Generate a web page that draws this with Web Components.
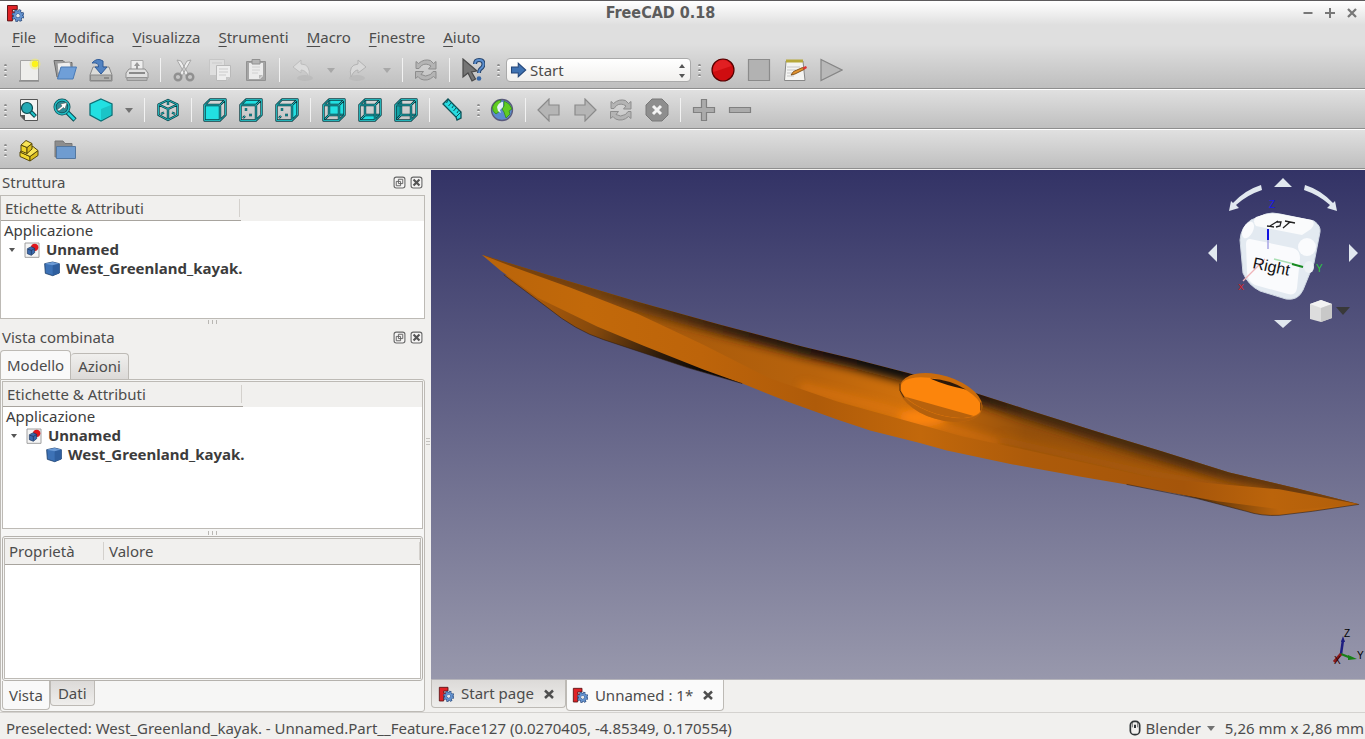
<!DOCTYPE html>
<html lang="it">
<head>
<meta charset="utf-8">
<title>FreeCAD 0.18</title>
<style>
html, body { margin: 0; height: 100%; }
body { font: 15px/19px "Noto Sans", "Open Sans", sans-serif; color: #4c4c4c; background: #f1f0ee; overflow: hidden; }
</style>
</head>
<body>
<cad-window></cad-window>
<script>
const wires = d => `<path d="${d}" fill="none" stroke="#0a3f45" stroke-width="2.400" stroke-linejoin="round"/><path d="${d}" fill="none" stroke="#25bfc4" stroke-width=".900" stroke-linejoin="round"/>`;
const faces = {
  front: 'M1.500 7H17V22.500H1.500Z', rear: 'M7 1.500H22.500V17H7Z',
  top: 'M1.500 7L7 1.500H22.500L17 7Z', bottom: 'M1.500 22.500L7 17H22.500L17 22.500Z',
  left: 'M1.500 7L7 1.500V17L1.500 22.500Z', right: 'M17 7L22.500 1.500V17L17 22.500Z'
};
const box = face => {
  const fill = `<path d="${faces[face]}" fill="${face === 'left' ? '#14a3a6' : '#22e0e2'}"/>`;
  const inner = {
    front: '', top: wires('M7 10V13M4 20L6 18M10 17H13'), right: wires('M7 10V13M4 20L6 18M10 17H13'),
    rear: wires('M7 2V17H22M7 17L2 22'), bottom: wires('M7 2V17H22M7 17L2 22'), left: wires('M7 2V17H22M7 17L2 22')
  }[face];
  return fill + inner + wires('M1.500 7H17V22.500H1.500ZM1.500 7L7 1.500H22.500L17 7M22.500 1.500V17L17 22.500');
};
const fclogo = `<path d="M2 2H15V7.500H8.500V10.500H12.500V15.500H8.500V22.500H2Z" fill="#e02226" stroke="#5c1416" stroke-width="1.300"/>
<circle cx="16" cy="15.500" r="6.600" fill="none" stroke="#28487a" stroke-width="3.600" stroke-dasharray="3.100 2.080"/><circle cx="16" cy="15.500" r="4.400" fill="none" stroke="#28487a" stroke-width="4.600"/><circle cx="16" cy="15.500" r="6.200" fill="none" stroke="#6593cf" stroke-width="2.600" stroke-dasharray="2 2.870" stroke-dashoffset="-.500"/><circle cx="16" cy="15.500" r="4.300" fill="none" stroke="#6593cf" stroke-width="2.800"/><circle cx="16" cy="15.500" r="2.200" fill="#e9e9e9"/>`;
const cycle = `<g fill="#b4b4b4" stroke="#8d8d8d" stroke-width="1"><path d="M2 10.500V3.500L4.500 5.500Q10 .5 16.500 2.500L19.500 5.500L22 3.500V11H14.500L17 8Q12 4.500 7.500 7.500L5 10.500Z"/><path d="M22 13.500V20.500L19.500 18.500Q13.500 24 6.500 21L4 18.500L1.500 20.500V13.500H9.500L7 16.500Q11.500 19.500 16.500 16.500L19 13.500Z"/></g>`;
const back = `<path d="M1 12L12 1V7H22V17H12V23Z" fill="#b5b5b5" stroke="#8a8a8a" stroke-width="1.200"/>`;
const ICONS = {
  logo: fclogo,
  new: `<path d="M3.500 2.500H21.500V22.500H3.500Z" fill="#eeeeec" stroke="#a5a5a5"/><path d="M2 23H22" stroke="#777" /><circle cx="18" cy="6" r="5.500" fill="#f5ef5a" opacity=".5"/><circle cx="18" cy="6" r="3.200" fill="#fcf31a"/>`,
  open: `<path d="M1 2.500H10L12 4.500H19V19H4Z" fill="#9b9b9b" stroke="#6b6b6b"/><path d="M4 5L17 4L19 15H5Z" fill="#eee" stroke="#999"/><path d="M8 9H23.500L20 21H4.500Z" fill="#6f9fd8" stroke="#4a7ab5"/>`,
  save: `<path d="M4 9H20L23 17V23H1V17Z" fill="#dcdcda" stroke="#888"/><path d="M1.500 17H22.500V22.500H1.500Z" fill="#b0b0ae" stroke="#888"/><path d="M15 20H20" stroke="#666"/><path d="M3 5Q8-1 14 3V9H18L12 16L6 9H9.500Q10 4 3 5Z" fill="#5283c2" stroke="#2f5b98"/>`,
  print: `<path d="M6 2.500H18V13H6Z" fill="#eee" stroke="#aaa"/><path d="M12 4L15 8H13V11H11V8H9Z" fill="#999"/><path d="M4 11H20L23 15V20H1V15Z" fill="#e0e0e0" stroke="#8f8f8f"/><path d="M4 15H20" stroke="#8a8a8a" stroke-width="2"/><path d="M2 19.500H22V22.500H2Z" fill="#b5b5b5" stroke="#949494"/>`,
  cut: `<path d="M5 2L9 3L17 17L14 18ZM19 2L15 3L7 17L10 18Z" fill="#eee" stroke="#a8a8a8"/><circle cx="6" cy="19" r="3.300" fill="none" stroke="#909090" stroke-width="2.400"/><circle cx="18" cy="19" r="3.300" fill="none" stroke="#909090" stroke-width="2.400"/>`,
  copy: `<path d="M1.500 1.500H16.500V17.500H1.500Z" fill="#dedede" stroke="#c6c6c6"/><path d="M8.500 7.500H22.500V19L19 22.500H8.500Z" fill="#ededed" stroke="#b9b9b9"/><path d="M11 11H20M11 14H20M11 17H18M4 5H14" stroke="#cbcbcb"/><path d="M18 23V19H22Z" fill="#c6c6c6"/>`,
  paste: `<path d="M2.500 3.500H21.500V22.500H2.500Z" fill="#a5a5a5" stroke="#929292"/><path d="M5 5H19V18L16 21H5Z" fill="#ebebeb"/><path d="M8 1.500H16V6H8Z" fill="#b5b5b5" stroke="#909090"/><path d="M8 9H16M8 12H16M8 15H14" stroke="#d0d0d0"/><path d="M15 21V17H19Z" fill="#bbb"/>`,
  undo: `<ellipse cx="14" cy="20" rx="8" ry="3" fill="#b8b8b8" opacity=".7"/><path d="M2 9L10 2V6Q20 6 18 19Q15 12 10 12V15Z" fill="#dcdcdc" stroke="#bdbdbd"/>`,
  redo: `<ellipse cx="10" cy="20" rx="8" ry="3" fill="#b8b8b8" opacity=".7"/><path d="M19 9L11 2V6Q1 7 4 19Q7 12 11 12V15Z" fill="#d8d8d8" stroke="#b2b2b2"/>`,
  cycle,
  help: `<path d="M2 1V19L7 15L11 23L14.500 21L10.500 14L16 13Z" fill="#757575" stroke="#4a4a4a" stroke-width="1.200"/><path d="M14 6Q14 2 18 2Q22.500 2 22.500 6Q22.500 9 19.500 11Q18 12 18 15" fill="none" stroke="#27466f" stroke-width="4"/><path d="M14 6Q14 2 18 2Q22.500 2 22.500 6Q22.500 9 19.500 11Q18 12 18 15" fill="none" stroke="#5c8fcf" stroke-width="1.800"/><circle cx="18" cy="20.500" r="2.300" fill="#3867a5"/>`,
  go: `<path d="M2 8H11V3L21 12L11 21V16H2Z" fill="#3f72b2" stroke="#24477a" stroke-width="1.400"/>`,
  record: `<circle cx="12" cy="12" r="11" fill="#cf0d10" stroke="#500" stroke-width="1.200"/><path d="M2.500 14a9.500 9.500 0 0 1 18-6z" fill="#ed2b2e" opacity=".6"/>`,
  stop: `<path d="M1.500 1.500H22.500V22.500H1.500Z" fill="#b2b2b2" stroke="#8b8b8b" stroke-width="1.200"/>`,
  macro: `<path d="M3 3H20L22 22.500H1.500Z" fill="#f4f4f2" stroke="#888"/><path d="M3 1.500H20V4.500H3Z" fill="#b7a83a"/><path d="M4 9H17M4 12H13M4 15H11M4 18H11" stroke="#c6c6c6"/><path d="M8 17L10.500 13.500L19.500 9.500L21 11.500L12 16Z" fill="#e4932d" stroke="#7b4c13" stroke-width=".900"/><path d="M19.500 9.500L23 8L24 10L21 11.800Z" fill="#d33"/>`,
  play: `<path d="M2 1.500L23 12L2 22.500Z" fill="#b8b8b8" stroke="#858585" stroke-width="1.200"/>`,
  fit: `<path d="M3.500 1.500H20.500V22.500H8L3.500 18Z" fill="#f3f3f3" stroke="#555"/><path d="M3 17H8V23Z" fill="#555"/><path d="M13 13L18.500 18.500" stroke="#0a4a50" stroke-width="4"/><path d="M13 13L18 18" stroke="#20c5cb" stroke-width="2"/><circle cx="10" cy="10" r="5.500" fill="#24a9b4" stroke="#0a4a50" stroke-width="1.200"/>`,
  zoom: `<path d="M13 13L22 22" stroke="#0a4a50" stroke-width="4.600"/><path d="M14 14L21.500 21.500" stroke="#20d5db" stroke-width="2.600"/><circle cx="9" cy="9" r="7" fill="#2a8c96" stroke="#0a4a50" stroke-width="3"/><circle cx="9" cy="9" r="7" fill="none" stroke="#22bdc5" stroke-width="1.600"/><path d="M4 12L9 8L7.500 6L14 4.500L12 11L10.500 9.500L6 13Z" fill="#fff" stroke="#555" stroke-width=".600"/>`,
  solid: `<path d="M12 1L23 6V17L12 23L1 17V6Z" fill="#22e0e2" stroke="#0b7076" stroke-width="1.300"/><path d="M12 11L22 7V17L12 22Z" fill="#1bc4c7"/>`,
  iso: wires('M12 2L21.500 6.500V17L12 22L2.500 17V6.500ZM2.500 6.500L12 11L21.500 6.500M12 11V22M12 2V7M5 16L8 14.500M19 16L16 14.500'),
  front: box('front'), top: box('top'), right: box('right'), rear: box('rear'), bottom: box('bottom'), left: box('left'),
  measure: `<path d="M2 6L7 1L20 14V20L16 22L15 19Z" fill="#27dbe0" stroke="#0b5258" stroke-width="1.300"/><path d="M15 19L20 14M7 2L5.500 5M10 5L7.500 8M12.500 7.500L11 10M15 10L12.500 13M17.500 12.500L16 15" stroke="#0b5258"/>`,
  globe: `<circle cx="12" cy="12" r="10.500" fill="#5b8ace" stroke="#5a5a7c" stroke-width="1.300"/><path d="M2.500 9Q5 2.500 11 2L10 6L8 9L10 13L6 16Q2 13 2.500 9ZM14 3Q20 5 22 11L19 13L20 16L16 20L14 14L12 11L14 8Z" fill="#61cc22" stroke="#2c8411" stroke-width=".700"/><path d="M7 9Q9 4 13 4L13 9L10 12L11 15L8 13Z" fill="#e2f0f6"/>`,
  back, forward: `<g transform="matrix(-1 0 0 1 24 0)">${back}</g>`,
  cancel: `<path d="M7 1H17L23 7V17L17 23H7L1 17V7Z" fill="#8e8e8e" stroke="#787878"/><path d="M8 8L16 16M16 8L8 16" stroke="#f4f4f4" stroke-width="3"/>`,
  plus: `<path d="M9.500 1.500H14.500V9.500H22.500V14.500H14.500V22.500H9.500V14.500H1.500V9.500H9.500Z" fill="#ababab" stroke="#808080" stroke-width="1.200"/>`,
  minus: `<path d="M1.500 9.500H22.500V14.500H1.500Z" fill="#ababab" stroke="#808080" stroke-width="1.200"/>`,
  part: `<g fill="#f0d62c" stroke="#57490a" stroke-linejoin="round"><path d="M3 14L13 18.500V23L3 18.500Z"/><path d="M13 18.500L21 12.500V17.500L13 23Z" fill="#dcbf20"/><path d="M3 14L6 12L16 8.500L21 12.500L13 18.500Z" fill="#f8e456"/><path d="M4 7L10 9.500V15.500L4 13Z"/><path d="M10 9.500L15 5.500V11L10 15.500Z" fill="#dcbf20"/><path d="M4 7L9 2.500L15 5.500L10 9.500Z" fill="#f8e456"/></g>`,
  folder: `<path d="M2 3H10L12 5.500H19V19H2Z" fill="#8d8d8d" stroke="#777"/><path d="M3.500 8.500H22.500V20.500H3.500Z" fill="#6f9cd0" stroke="#54779f"/>`,
  doc: `<path d="M1.500 1.500H22.500V23H1.500Z" fill="#f5f5f5" stroke="#999" stroke-width="1.400"/><circle cx="16" cy="8" r="5.500" fill="#e0161b"/><path d="M5 10L11 7L16 9.500V16L11 20L5 17.500Z" fill="#3a69ad" stroke="#1a3054"/><path d="M6 11L11 12.500L16 10M11 12.500V19" fill="none" stroke="#1a3054"/>`,
  cube: `<path d="M1 4L13 1.500L23 4V18L13 22L2 18.500Z" fill="#3d72b6" stroke="#173864" stroke-width="1.200"/><path d="M1 4L13 6.500L23 4L13 1.500Z" fill="#6b9bd6"/><path d="M13 6.500L23 4V18L13 22Z" fill="#2f5f9f"/>`,
  mouse: `<rect x="5" y="2" width="14" height="20" rx="6" fill="none" stroke="#2f3436" stroke-width="2.500"/><path d="M12 7V12" stroke="#2f3436" stroke-width="3"/><path d="M8 3V11M16 3V11" stroke="#2f3436" stroke-width="1"/>`,
  close: `<path d="M4 5L20 20M20 5L4 20" stroke="#4e4e4e" stroke-width="5"/>`,
  wmin: `<path d="M3 12H21" stroke="#777" stroke-width="4"/>`,
  wmax: `<path d="M2 12H22M12 2V22" stroke="#777" stroke-width="4"/>`,
  wclose: `<path d="M4 4L20 20M20 4L4 20" stroke="#777" stroke-width="4.500"/>`,
  float: `<rect x="2" y="2" width="20" height="20" rx="4" fill="#f6f5f4" stroke="#666" stroke-width="2"/><path d="M10 6H18V14H10ZM6 10H14V18H6Z" fill="#f6f5f4" stroke="#666" stroke-width="1.800"/>`,
  dismiss: `<rect x="2" y="2" width="20" height="20" rx="4" fill="#f6f5f4" stroke="#666" stroke-width="2"/><path d="M6.500 6.500L17.500 17.500M17.500 6.500L6.500 17.500" stroke="#555" stroke-width="4"/>`
};

const define = (name, css, html) => customElements.define(name, class extends HTMLElement {
  connectedCallback() {
    if (this.shadowRoot) return;
    const root = this.attachShadow({ mode: 'open' });
    root.innerHTML = `<style>*{box-sizing:border-box}button{font:inherit;color:inherit;border:0;background:none;padding:0;margin:0}${css}</style>${typeof html === 'function' ? html(this) : html}`;
  }
});

define('cad-icon', ':host{display:block;width:24px;height:24px;flex:none}svg{display:block;width:100%;height:100%}',
  el => `<svg viewBox="0 0 24 24" aria-hidden="true">${ICONS[el.getAttribute('name')]}</svg>`);

define('icon-button', ':host{display:block;flex:none}button{display:grid;place-items:center;width:100%;height:100%}cad-icon{width:var(--icon,24px);height:var(--icon,24px)}',
  el => `<button type="button" aria-label="${el.getAttribute('label')}"><cad-icon name="${el.getAttribute('name')}"></cad-icon></button>`);

define('tool-grip', ':host{display:flex;flex-direction:column;gap:2px;align-items:center;justify-content:center;width:11px;flex:none}i{width:3px;height:3px;border-radius:2px;background:#8a8a8a;border-bottom:1px solid #fff}',
  '<i></i><i></i><i></i>');
define('tool-sep', ':host{display:flex;justify-content:center;align-items:center;width:11px;flex:none}i{width:1px;height:24px;background:#f2f2f2}', '<i></i>');
define('menu-arrow', ':host{display:block;flex:none;width:20px}button{display:grid;place-items:center;width:100%;height:100%}i{border:4px solid transparent;border-top:5px solid var(--arrow,#727272);border-bottom:0}',
  '<button type="button" aria-label="Altre opzioni"><i></i></button>');

define('title-bar', `:host{display:flex;height:25px;border-top:1px solid #5c5a5c;background:linear-gradient(#fff,#dfdfdf);align-items:center;padding:0 2px 0 6px}
 h1{flex:1;margin:0;text-align:center;font:bold 16px/20px "DejaVu Sans Condensed","DejaVu Sans",sans-serif;color:#5c5c5c}
 cad-icon{width:18px;height:18px}nav{display:flex}icon-button{width:22px;height:24px;--icon:12px}`,
  `<cad-icon name="logo"></cad-icon><h1>FreeCAD 0.18</h1><nav><icon-button name="wmin" label="Riduci"></icon-button><icon-button name="wmax" label="Ingrandisci"></icon-button><icon-button name="wclose" label="Chiudi"></icon-button></nav>`);

define('menu-bar', ':host{display:flex;height:27px;padding:0 0 3px 3px}button{padding:0 9px}u{text-underline-offset:3px;text-decoration-thickness:1px}',
  ['File','Modifica','Visualizza','Strumenti','Macro','Finestre','Aiuto'].map(t => `<button type="button"><u>${t[0]}</u>${t.slice(1)}</button>`).join(''));

define('tool-row', ':host{display:flex;height:36px;align-items:stretch}', '<slot></slot>');

define('workbench-select', `:host{display:block;position:relative;width:185px;height:24px;align-self:center;margin:0 3px 0 2px}
 select{appearance:none;width:100%;height:100%;border:1px solid #aaa;border-radius:4px;background:linear-gradient(#fff,#f1f0ee);font:inherit;color:inherit;padding:0 24px 0 23px}
 cad-icon{position:absolute;left:4px;top:3px;width:18px;height:18px}
 .up,.down{position:absolute;right:6px;border:3px solid transparent}.up{top:6px;border-bottom:4px solid #555;border-top:0}.down{bottom:4px;border-top:4px solid #555;border-bottom:0}`,
  `<select aria-label="Ambiente"><option>Start</option></select><cad-icon name="go"></cad-icon><i class="up"></i><i class="down"></i>`);

const b = (name, label) => `<icon-button name="${name}" label="${label}"></icon-button>`;
define('tool-area', `:host{display:block}
 section{border-bottom:1px solid #8e8e8e}
 .a{background:linear-gradient(#dfdfdf 30%,#bebebe)}
 .b{height:40px;padding-top:2px;border-top:1px solid #fff;background:linear-gradient(#e0e0e0,#bfbfbf)}
 icon-button{width:36px} .faint{--arrow:#a8a8a8} .gap{margin-left:2px}`,
  `<section class="a"><menu-bar></menu-bar><tool-row>
   <tool-grip></tool-grip>${b('new','Nuovo')}${b('open','Apri')}${b('save','Salva')}${b('print','Stampa')}
   <tool-sep></tool-sep>${b('cut','Taglia')}${b('copy','Copia')}${b('paste','Incolla')}<tool-sep></tool-sep>
   ${b('undo','Annulla')}<menu-arrow class="faint"></menu-arrow>${b('redo','Ripristina')}<menu-arrow class="faint"></menu-arrow><tool-sep></tool-sep>
   ${b('cycle','Aggiorna')}<tool-sep></tool-sep>${b('help','Che cos\'è?')}
   <tool-grip class="gap"></tool-grip><workbench-select></workbench-select>
   <tool-grip></tool-grip>${b('record','Registra macro')}${b('stop','Ferma macro')}${b('macro','Macro')}${b('play','Esegui macro')}
  </tool-row></section>
  <section class="b"><tool-row>
   <tool-grip></tool-grip>${b('fit','Adatta tutto')}${b('zoom','Adatta selezione')}${b('solid','Stile')}<menu-arrow></menu-arrow><tool-sep></tool-sep>
   ${b('iso','Assonometrica')}<tool-sep></tool-sep>${b('front','Davanti')}${b('top','Alto')}${b('right','Destra')}<tool-sep></tool-sep>
   ${b('rear','Dietro')}${b('bottom','Basso')}${b('left','Sinistra')}<tool-sep></tool-sep>${b('measure','Misura')}
   <tool-grip class="gap"></tool-grip>${b('globe','Apri sito')}<tool-sep></tool-sep>${b('back','Indietro')}${b('forward','Avanti')}${b('cycle','Ricarica')}${b('cancel','Interrompi')}<tool-sep></tool-sep>${b('plus','Ingrandisci')}${b('minus','Rimpicciolisci')}
  </tool-row></section>
  <section class="b"><tool-row><tool-grip></tool-grip>${b('part','Parte')}${b('folder','Gruppo')}</tool-row></section>`);

define('dock-title', ':host{display:flex;height:25px;align-items:center;padding:0 0 0 2px}h2{font:inherit;flex:1;margin:0}icon-button{width:17px;height:17px;--icon:13px}',
  `<h2><slot></slot></h2>${b('float','Sgancia')}${b('dismiss','Chiudi')}`);

define('object-tree', `:host{display:block;flex:1;min-height:0;border:1px solid #bdbab5;background:#fff;color:#3c3c3c}
 header{height:25px;background:#f1f0ee;color:#4c4c4c}
 header span{display:flex;align-items:center;width:240px;height:25px;padding-left:4px;border-bottom:1px solid #a8a49e;background:linear-gradient(90deg,#d4d1cd,#d4d1cd) right 1px center/1px 18px no-repeat}
 ul{list-style:none;margin:0;padding:0}.root{padding-left:3px}li>div{display:flex;align-items:center;height:19px}
 .doc{padding-left:5px;font-weight:bold}.obj{padding-left:40px;font-weight:bold}
 .doc i{border:3px solid transparent;border-top:4px solid #555;border-bottom:0;margin-right:9px}
 cad-icon{width:16px;height:16px;margin-right:6px}`,
  `<header><span>Etichette &amp; Attributi</span></header><ul class="root"><li><div>Applicazione</div><ul><li><div class="doc"><i></i><cad-icon name="doc"></cad-icon>Unnamed</div><ul><li><div class="obj"><cad-icon name="cube"></cad-icon>West_Greenland_kayak.</div></li></ul></li></ul></li></ul>`);

define('split-grip', ':host{display:flex;height:7px;flex:none;align-items:center;justify-content:center;gap:2px}i{width:1px;height:4px;background:#b9b7b3;margin-right:1px}', '<i></i><i></i><i></i>');

define('property-table', `:host{display:block;flex:0 1 145px;min-height:0;border:1px solid #b5b2ad;border-radius:3px;padding:1px}
 div{height:100%;border:1px solid #bdbab5;background:#fff}
 table{width:100%;border-collapse:collapse;table-layout:fixed}
 th{height:25px;padding:0 4px;text-align:left;font-weight:normal;background:linear-gradient(#d4d1cd,#d4d1cd) right center/1px 18px no-repeat #f1f0ee;border-bottom:1px solid #a8a49e}
 th:first-child{width:99px}th+th{padding-left:5px}`,
  '<div><table><thead><tr><th scope="col">Proprietà</th><th scope="col">Valore</th></tr></thead></table></div>');

define('tab-item', `:host{display:block}
 button{height:25px;padding:0 7px;border:1px solid #bdbab5;background:linear-gradient(#f0efed,#dcdad8)}
 :host([edge=top]) button{height:26px;border-bottom:0;border-radius:4px 4px 0 0;border-left-width:0}
 :host([edge=bottom]) button{border-top:0;border-radius:0 0 4px 4px;background:linear-gradient(#dcdad8,#efeeec)}
 :host([active][edge]) button{height:29px;padding:0 6px;border-left-width:1px;background:#f9f9f9}`,
  '<button type="button" role="tab"><slot></slot></button>');

define('combo-view', `:host{display:flex;flex-direction:column;flex:1;min-height:0}
 .tabs{display:flex;height:29px;align-items:flex-end}
 .panel{flex:1;min-height:0;display:flex;flex-direction:column;border:1px solid #bdbab5;border-radius:0 3px 3px 3px;background:#f6f6f5;padding:1px}
 .low{display:flex;align-items:flex-start;height:29px;flex:none}`,
  `<div class="tabs"><tab-item edge="top" active>Modello</tab-item><tab-item edge="top">Azioni</tab-item></div>
  <div class="panel"><object-tree></object-tree><split-grip></split-grip><property-table></property-table>
  <div class="low"><tab-item edge="bottom" active>Vista</tab-item><tab-item edge="bottom">Dati</tab-item></div></div>`);

define('side-dock', `:host{display:flex;width:431px;flex:none}
 .col{flex:1;min-width:0;display:flex;flex-direction:column}
 .upper{display:flex;flex-direction:column;flex:0 0 149px}
 .bar{width:6px;display:flex;flex-direction:column;justify-content:center;align-items:center;gap:2px}.bar i{width:4px;height:1px;background:#c4c2be}
 .col>split-grip{height:6px}`,
  `<div class="col"><div class="upper"><dock-title>Struttura</dock-title><object-tree></object-tree></div><split-grip></split-grip>
  <dock-title>Vista combinata</dock-title><combo-view></combo-view></div><div class="bar"><i></i><i></i><i></i></div>`);

const TOP = 'M481 255L553 277L637 302L720 325L803 347L853 359L910 374L977 394L1030 411L1097 432L1163 452L1230 473L1297 489L1360 505';
define('kayak-view', ':host{display:block;width:100%;height:100%}svg{display:block;width:100%;height:100%}',
  `<svg viewBox="431 170 934 510" role="img" aria-label="West_Greenland_kayak">
  <defs>
   <linearGradient id="deck" gradientUnits="userSpaceOnUse" x1="481" y1="0" x2="1360" y2="0"><stop offset="0" stop-color="#8c4c0a"/><stop offset=".15" stop-color="#a2570b"/><stop offset=".38" stop-color="#b8630c"/><stop offset=".48" stop-color="#cf700c"/><stop offset=".55" stop-color="#b3600b"/><stop offset=".62" stop-color="#95500b"/><stop offset=".8" stop-color="#9c530b"/><stop offset="1" stop-color="#85460b"/></linearGradient>
   <linearGradient id="side" gradientUnits="userSpaceOnUse" x1="481" y1="0" x2="1360" y2="0"><stop offset="0" stop-color="#b9640a"/><stop offset=".12" stop-color="#c2690a"/><stop offset=".25" stop-color="#bd640a"/><stop offset=".38" stop-color="#af5b09"/><stop offset=".5" stop-color="#c2680b"/><stop offset=".62" stop-color="#ad5b0a"/><stop offset=".8" stop-color="#a5550a"/><stop offset=".9" stop-color="#bb640b"/><stop offset="1" stop-color="#b25f0a"/></linearGradient>
   <linearGradient id="keel" gradientUnits="userSpaceOnUse" x1="540" y1="300" x2="700" y2="370"><stop offset="0" stop-color="#a8590b"/><stop offset=".35" stop-color="#85490c"/><stop offset=".75" stop-color="#2e1c0b"/><stop offset="1" stop-color="#0e0a08"/></linearGradient>
   <linearGradient id="bow" gradientUnits="userSpaceOnUse" x1="1150" y1="0" x2="1280" y2="0"><stop offset="0" stop-color="#100b08"/><stop offset=".4" stop-color="#5a330b"/><stop offset="1" stop-color="#bb640b"/></linearGradient>
   <linearGradient id="edge" gradientUnits="userSpaceOnUse" x1="481" y1="0" x2="1360" y2="0"><stop offset="0" stop-color="#7c430a"/><stop offset=".13" stop-color="#70400a"/><stop offset=".3" stop-color="#2c1a0a"/><stop offset=".45" stop-color="#0d0908"/><stop offset=".55" stop-color="#1c110a"/><stop offset=".62" stop-color="#3f260b"/><stop offset=".8" stop-color="#4a2b0b"/><stop offset="1" stop-color="#7b430b"/></linearGradient>
   <clipPath id="hull"><path d="${TOP}L1280 500L1147 480L1047 458L963 440L920 428L837 405L770 383L703 353L637 328L570 298L481 255Z"/></clipPath>
   <clipPath id="well"><ellipse cx="941" cy="398" rx="42" ry="17" transform="rotate(17 941 398)"/></clipPath>
   <filter id="soft" filterUnits="userSpaceOnUse" x="431" y="170" width="934" height="510"><feGaussianBlur stdDeviation="5"/></filter>
  </defs>
  <path d="M503 275L547 308Q575 331 603 340L687 368L742 384L720 360L560 285Z" fill="url(#keel)"/>
  <path d="M1120 482L1160 490L1197 499L1247 512Q1262 517 1280 516L1313 512L1360 505L1280 490Z" fill="url(#bow)"/>
  <g clip-path="url(#hull)">
   <path d="M470 240H1365V520H470Z" fill="url(#deck)"/>
   <path d="${TOP}" fill="none" stroke="url(#edge)" stroke-width="19" filter="url(#soft)"/>
   <path d="M800 387L885 409L930 424L1000 444" fill="none" stroke="#f5800c" stroke-width="9" filter="url(#soft)" opacity=".45"/>
   <path d="M1000 440L1150 474L1270 494" fill="none" stroke="#b9630c" stroke-width="8" filter="url(#soft)" opacity=".6"/>
   <ellipse cx="923" cy="418" rx="24" ry="9" fill="#fc840c" filter="url(#soft)"/>
  </g>
  <path d="M481 255L520 270L570 288L637 314L703 345L770 379L837 402L920 425L963 437L1047 455L1147 477L1213 484L1280 490L1360 505L1290 511L1218 502L1127 485L1080 477L1013 465L947 451L918 443L870 431L837 420L787 402L742 384L703 370L643 346L597 327L537 298L500 271Z" fill="url(#side)"/>
  <path d="M503 275L547 308Q575 331 603 340L687 368L742 384M1127 485L1197 499L1247 512Q1262 517 1280 516L1313 512L1360 505" fill="none" stroke="#2c1a0b" opacity=".55"/>
  <g transform="rotate(17 941 398)"><ellipse cx="941" cy="398" rx="43" ry="22" fill="#cb6c0c"/><path d="M898 398A43 22 0 0 0 984 398A42 17 0 0 1 898 398Z" fill="#b4600c"/></g>
  <g clip-path="url(#well)"><path d="M890 370H990V425H890Z" fill="#fc850c"/><path d="M890 393L990 421V430H890Z" fill="#b8620c"/></g>
  <path d="M930 379Q950 380 966 390Q946 386 930 379Z" fill="#2c190a"/>
  <path d="M900 384V391L904 398M981 403V411" fill="none" stroke="#4f2b0a"/>
  </svg>`);

define('nav-cube', ':host{display:block;width:175px;height:170px}svg{display:block}text{font-family:"Liberation Sans",sans-serif}',
  `<svg width="175" height="170" viewBox="0 0 175 170">
  <g fill="#e1e8ef"><path d="M93 8L102 17H84ZM93 158L102 150H84ZM18 83L27 74V92ZM168 83L159 74V92Z"/>
  <path d="M71 15L72 20Q57 25 46 35L49 38L39 41L41 31L43 33Q55 20 71 15Z"/><path d="M115 15L114 20Q129 25 140 35L137 38L147 41L145 31L143 33Q131 20 115 15Z"/></g>
  <path d="M76 44Q82 42 90 44L124 51Q131 56 130 62L124 93L113 120Q108 131 96 129L70 121Q58 115 53 103L50 70Q51 57 61 50Z" fill="#e3eaf1" stroke="#d1d9e3"/>
  <path d="M66 47Q78 42 90 44L122 50Q126 54 121 59L112 65L66 56Q62 51 66 47Z" fill="#fafbfc"/>
  <path d="M60 69L103 78Q110 80 110 88L107 118Q106 126 98 124L65 115Q57 111 57 102L56 74Q56 69 60 69Z" fill="#fafbfd"/>
  <ellipse cx="58" cy="60" rx="5" ry="9" transform="rotate(27 58 60)" fill="#fafbfd"/><circle cx="117" cy="77" r="9" fill="#fafbfd"/><ellipse cx="119" cy="97" rx="5" ry="6" fill="#eef2f6"/>
  <path d="M77 56L84 57M80 56L88 51M86 52H91L90 56L86 57M93 58L100 52M95 51L105 53" stroke="#222" stroke-width="1.300" fill="none"/>
  <path d="M78 79V59" stroke="#a7a4e5" stroke-width="1.500"/><path d="M78 70V59" stroke="#1111e0" stroke-width="2"/><path d="M84 89L104 94" stroke="#a8dfb2" stroke-width="1.500"/><path d="M102 94L113 97" stroke="#178b21" stroke-width="2"/><path d="M75 89L53 111" stroke="#efb3b8" stroke-width="1.200"/>
  <text x="62" y="98" font-size="16" fill="#111" transform="rotate(12 62 98)">Right</text>
  <text x="79" y="38" font-size="10" fill="#1818ec">Z</text><text x="126" y="102" font-size="10" fill="#2ecc40">Y</text><text x="48" y="120" font-size="9" fill="#d22">X</text>
  <path d="M120 134L131 130L142 134V148L131 152L120 149Z" fill="#ddd"/><path d="M120 134L131 130L142 134L131 138Z" fill="#f2f2f2"/><path d="M131 138L142 134V148L131 152Z" fill="#c8c8c8"/><path d="M146 137H160L153 145Z" fill="#393939"/>
  </svg>`);

define('axis-cross', ':host{display:block;width:36px;height:44px}svg{display:block}text{font:10px "Liberation Sans",sans-serif}',
  `<svg width="36" height="44" viewBox="0 0 36 44"><path d="M12 26L14 12" stroke="#1d1d80" stroke-width="2.500"/><path d="M12 14L14 8L16 14Z" fill="#1d1d80"/><path d="M12 26L22 30" stroke="#168016" stroke-width="2"/><path d="M19 27L28 31L19 32Z" fill="#168016"/><path d="M12 26L5 34" stroke="#8b1c1c" stroke-width="3"/><text x="15" y="9">Z</text><text x="28" y="31">Y</text><text x="5" y="36" fill="#300">X</text></svg>`);

define('doc-tab', `:host{display:flex;align-items:center;gap:7px;height:28px;padding:0 8px 0 6px;border:1px solid #bdbab5;border-top:0;border-radius:0 0 4px 4px;background:linear-gradient(#dcdad8,#efeeec);box-sizing:border-box}
 :host([active]){height:31px;background:#fafafa;padding:0 7px 0 5px}
 cad-icon{width:16px;height:16px}icon-button{width:16px;height:18px;--icon:12px}.t{white-space:nowrap}`,
  `<cad-icon name="logo"></cad-icon><button class="t" type="button" role="tab"><slot></slot></button><icon-button name="close" label="Chiudi scheda"></icon-button>`);

define('view-area', `:host{display:flex;flex-direction:column;flex:1;min-width:0}
 .scene{position:relative;flex:1;min-height:0;background:linear-gradient(#333366,#9898ac);border-bottom:1px solid #b5b4ba;overflow:hidden}
 nav-cube{position:absolute;right:0;top:0}axis-cross{position:absolute;right:0;bottom:7px}
 .tabs{display:flex;align-items:flex-start;height:32px;flex:none}`,
  `<div class="scene"><kayak-view></kayak-view><nav-cube></nav-cube><axis-cross></axis-cross></div>
  <div class="tabs"><doc-tab>Start page</doc-tab><doc-tab active>Unnamed : 1*</doc-tab></div>`);

define('status-bar', `:host{display:flex;height:27px;align-items:center;border-top:1px solid #d4d2cf;padding:4px 1px 0 6px;flex:none;box-sizing:border-box;white-space:nowrap}
 .msg{flex:1}button{display:flex;align-items:center;margin-right:4px}button cad-icon{width:16px;height:16px;margin-right:3px}
 i{border:4px solid transparent;border-top:5px solid #727272;border-bottom:0;margin:0 6px}`,
  `<span class="msg">Preselected: West_Greenland_kayak. - Unnamed.Part__Feature.Face127 (0.0270405, -4.85349, 0.170554)</span><button type="button"><cad-icon name="mouse"></cad-icon>Blender<i></i></button><span>5,26 mm x 2,86 mm</span>`);

define('cad-window', ':host{display:flex;flex-direction:column;height:100vh}main{display:flex;flex:1;min-height:0;padding-top:1px}tool-area,title-bar{flex:none}title-bar{box-sizing:border-box}',
  '<title-bar></title-bar><tool-area></tool-area><main><side-dock></side-dock><view-area></view-area></main><status-bar></status-bar>');
</script>
</body>
</html>
